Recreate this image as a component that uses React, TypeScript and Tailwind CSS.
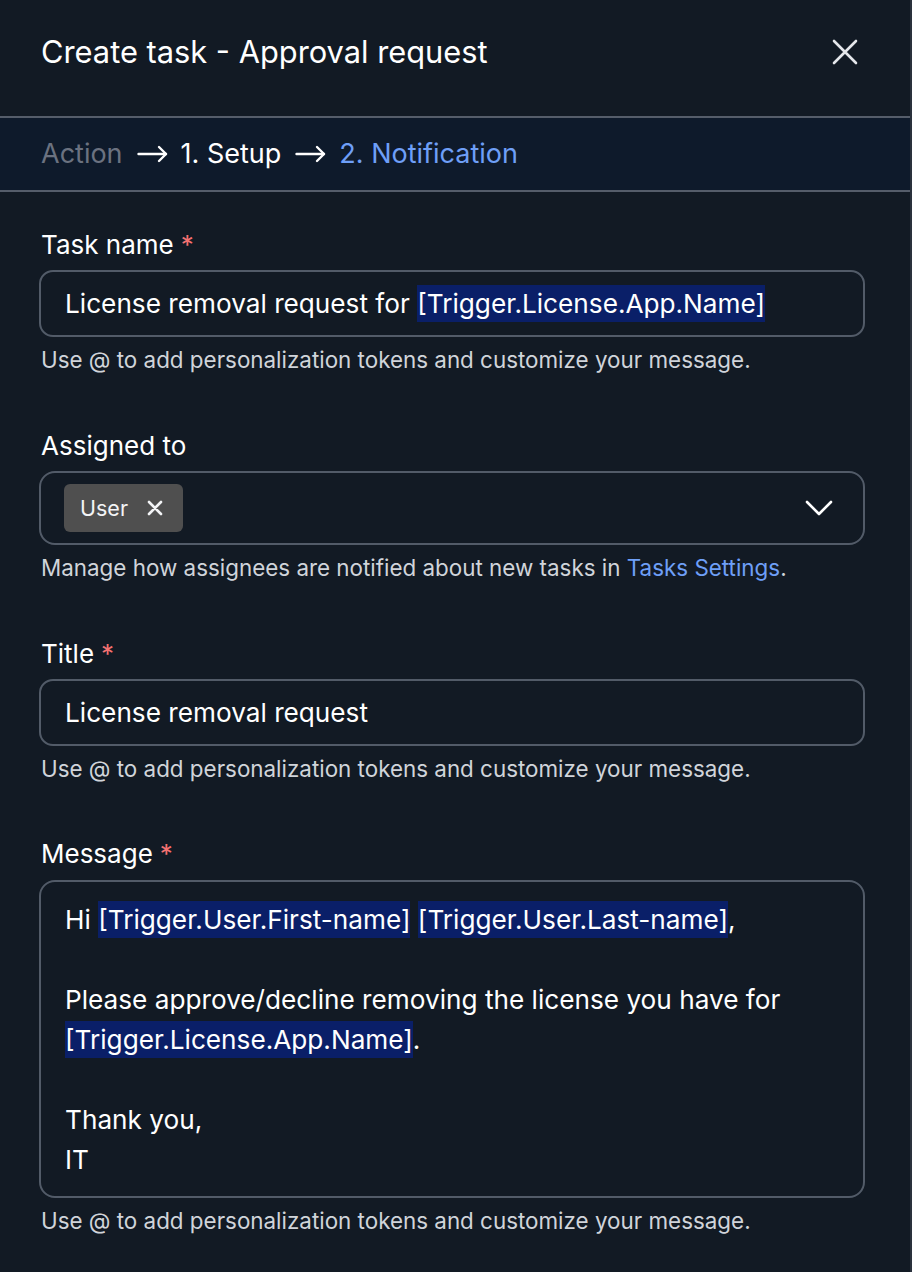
import React from "react";

const Token = ({ children }: { children: React.ReactNode }) => (
  <span className="bg-[#0a1f68] py-[3px]">{children}</span>
);

const Req = () => <span className="text-[#f47171] ml-[7px]">*</span>;

const Label = ({ children, req }: { children: React.ReactNode; req?: boolean }) => (
  <div className="ml-[2px] text-[26px] leading-[32px] text-white">
    {children}
    {req && <Req />}
  </div>
);

const Helper = ({ children }: { children: React.ReactNode }) => (
  <div className="ml-[2px] mt-[9px] text-[22.4px] leading-[28px] text-[#d0d4da]">{children}</div>
);

const Arrow = () => (
  <svg width="31" height="18" viewBox="0 0 31 18" fill="none" stroke="currentColor" strokeWidth="2.4" strokeLinecap="round" strokeLinejoin="round" className="ml-[14px] mr-[13px] text-white">
    <path d="M1.5 9h27.5" />
    <path d="M22 2l7 7-7 7" />
  </svg>
);

export default function App() {
  return (
    <div className="w-[912px] h-[1272px] bg-[#121a24] border-r-2 border-[#2a313c] text-white font-['Inter',sans-serif] overflow-hidden">
      <div className="h-[118px] border-b-2 border-[#555d6a] flex items-start justify-between pl-[41px] pr-[52px] pt-[33px]">
        <div className="text-[30.8px] leading-[38px]">Create task - Approval request</div>
        <svg width="26" height="26" viewBox="0 0 26 26" fill="none" stroke="#e5e7eb" strokeWidth="2.6" strokeLinecap="round" className="mt-[6px]">
          <path d="M2 2l22 22M24 2L2 24" />
        </svg>
      </div>
      <div className="h-[74px] border-b-2 border-[#555d6a] bg-[#0e1a2b] flex items-center pl-[41px] text-[27px] leading-[34px]">
        <span className="text-[#6b7280]">Action</span>
        <Arrow />
        <span className="text-white">1. Setup</span>
        <Arrow />
        <span className="text-[#6e9ff7]">2. Notification</span>
      </div>

      <div className="pl-[39px] pr-[45px] pt-[37px] flex flex-col">
        {/* Task name */}
        <Label req>Task name</Label>
        <div className="mt-[9px] h-[67px] rounded-[14px] border-2 border-[#525b68] flex items-center pl-[24px] text-[26.2px]">
          <span>
            License removal request for <Token>[Trigger.License.App.Name]</Token>
          </span>
        </div>
        <Helper>Use @ to add personalization tokens and customize your message.</Helper>

        {/* Assigned to */}
        <div className="mt-[56px]">
          <Label>Assigned to</Label>
        </div>
        <div className="mt-[9px] h-[74px] rounded-[16px] border-2 border-[#525b68] flex items-center justify-between pl-[23px] pr-[30px]">
          <div className="h-[48px] w-[119px] rounded-[6px] bg-[#4f4f4f] flex items-center pl-[16px] gap-[19px]">
            <span className="text-[21.5px] text-[#f3f4f6]">User</span>
            <svg width="16" height="16" viewBox="0 0 16 16" fill="none" stroke="#f3f4f6" strokeWidth="2.6" strokeLinecap="round">
              <path d="M2 2l12 12M14 2L2 14" />
            </svg>
          </div>
          <svg width="28" height="16" viewBox="0 0 28 16" fill="none" stroke="white" strokeWidth="2.6" strokeLinecap="round" strokeLinejoin="round">
            <path d="M2 2l12 12L26 2" />
          </svg>
        </div>
        <Helper>
          Manage how assignees are notified about new tasks in <span className="text-[#6e9ff7]">Tasks Settings</span>.
        </Helper>

        {/* Title */}
        <div className="mt-[56px]">
          <Label req>Title</Label>
        </div>
        <div className="mt-[9px] h-[67px] rounded-[14px] border-2 border-[#525b68] flex items-center pl-[24px] text-[26.2px]">
          License removal request
        </div>
        <Helper>Use @ to add personalization tokens and customize your message.</Helper>

        {/* Message */}
        <div className="mt-[55px]">
          <Label req>Message</Label>
        </div>
        <div className="mt-[10px] h-[318px] rounded-[16px] border-2 border-[#525b68] pl-[24px] pt-[18px] text-[26.2px] leading-[40px]">
          <div>
            Hi <Token>[Trigger.User.First-name]</Token> <Token>[Trigger.User.Last-name]</Token>,
          </div>
          <div className="h-[40px]" />
          <div>Please approve/decline removing the license you have for</div>
          <div>
            <Token>[Trigger.License.App.Name]</Token>.
          </div>
          <div className="h-[40px]" />
          <div>Thank you,</div>
          <div>IT</div>
        </div>
        <Helper>Use @ to add personalization tokens and customize your message.</Helper>
      </div>
    </div>
  );
}
